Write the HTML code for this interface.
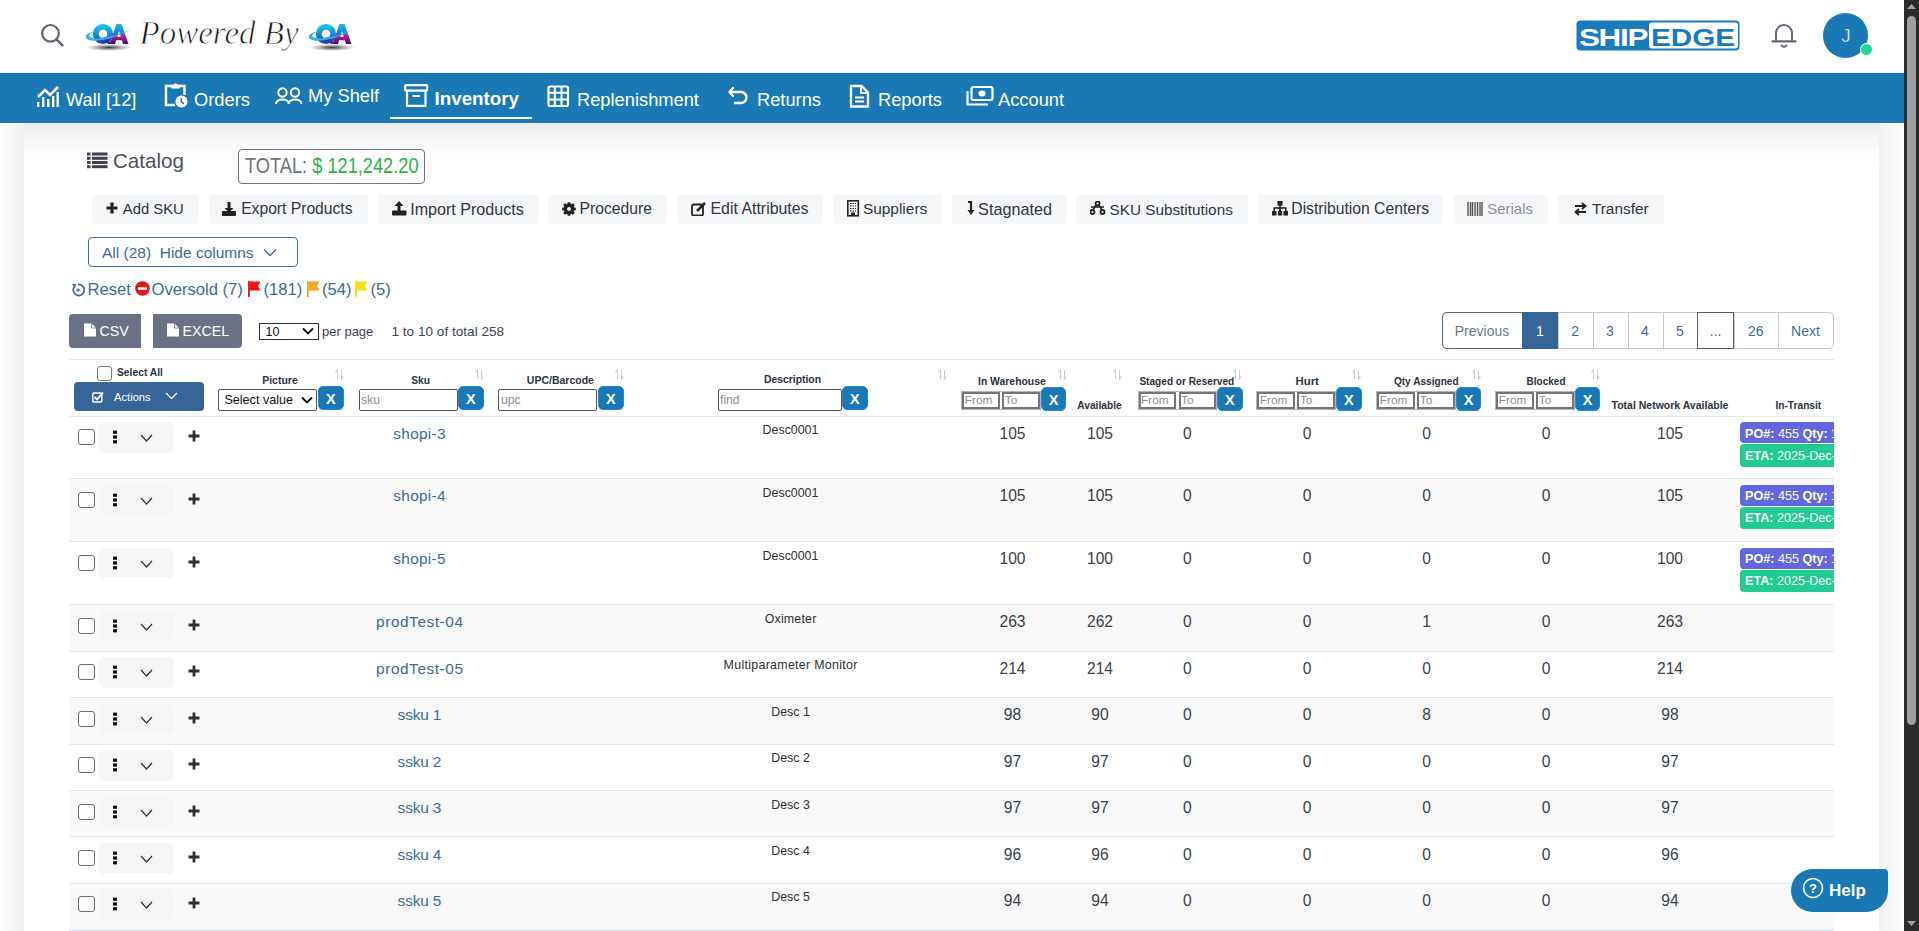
<!DOCTYPE html>
<html><head><meta charset="utf-8"><title>Catalog</title><style>
*{box-sizing:border-box}
html,body{margin:0;padding:0}
body{width:1919px;height:931px;overflow:hidden;position:relative;background:#fff;font-family:"Liberation Sans",sans-serif;color:#3b4252}
.a{position:absolute;white-space:nowrap}
</style></head>
<body>
<svg class="a" style="left:38px;top:21px;" width="28" height="28" viewBox="0 0 28 28"><circle cx="12.5" cy="12.3" r="8.3" fill="none" stroke="#5f6577" stroke-width="2.2"/><line x1="18.6" y1="18.4" x2="24.5" y2="24.3" stroke="#5f6577" stroke-width="2.4" stroke-linecap="round"/></svg><svg class="a" style="left:84px;top:14px;" width="50" height="40" viewBox="0 0 50 40">
<defs>
<linearGradient id="gql" x1="0" y1="0" x2="0" y2="1"><stop offset="0" stop-color="#16c0f0"/><stop offset="0.55" stop-color="#1a86d6"/><stop offset="1" stop-color="#2a3f9e"/></linearGradient>
<linearGradient id="gal" x1="0" y1="0" x2="0" y2="1"><stop offset="0" stop-color="#12bdf0"/><stop offset="0.45" stop-color="#1a7fd0"/><stop offset="0.62" stop-color="#c0158f"/><stop offset="1" stop-color="#2e1a7a"/></linearGradient>
<radialGradient id="gsl"><stop offset="0" stop-color="#000" stop-opacity="0.75"/><stop offset="0.6" stop-color="#000" stop-opacity="0.25"/><stop offset="1" stop-color="#000" stop-opacity="0"/></radialGradient>
</defs>
<ellipse cx="25" cy="33.5" rx="23" ry="3.6" fill="url(#gsl)"/>
<circle cx="19" cy="20" r="7.2" fill="none" stroke="url(#gql)" stroke-width="5.8"/>
<path d="M17 24 L24 30 L28 30 L21 23 Z" fill="#2a3d9a"/>
<path fill-rule="evenodd" d="M25.5 30 L32.5 10 L37.5 10 L44.5 30 L39 30 L37.8 26.3 L32.2 26.3 L31 30 Z M33.2 22.8 L35 17 L36.8 22.8 Z" fill="url(#gal)"/>
<path d="M2 22.5 C 1 29, 24 29, 47 15 C 28 24, 8 27, 5 22 C 6 19, 9 18, 12 17.5 C 6 18, 2 20, 2 22.5 Z" fill="#29b4ea"/>
</svg><svg class="a" style="left:307px;top:14px;" width="50" height="40" viewBox="0 0 50 40">
<defs>
<linearGradient id="gqr" x1="0" y1="0" x2="0" y2="1"><stop offset="0" stop-color="#16c0f0"/><stop offset="0.55" stop-color="#1a86d6"/><stop offset="1" stop-color="#2a3f9e"/></linearGradient>
<linearGradient id="gar" x1="0" y1="0" x2="0" y2="1"><stop offset="0" stop-color="#12bdf0"/><stop offset="0.45" stop-color="#1a7fd0"/><stop offset="0.62" stop-color="#c0158f"/><stop offset="1" stop-color="#2e1a7a"/></linearGradient>
<radialGradient id="gsr"><stop offset="0" stop-color="#000" stop-opacity="0.75"/><stop offset="0.6" stop-color="#000" stop-opacity="0.25"/><stop offset="1" stop-color="#000" stop-opacity="0"/></radialGradient>
</defs>
<ellipse cx="25" cy="33.5" rx="23" ry="3.6" fill="url(#gsr)"/>
<circle cx="19" cy="20" r="7.2" fill="none" stroke="url(#gqr)" stroke-width="5.8"/>
<path d="M17 24 L24 30 L28 30 L21 23 Z" fill="#2a3d9a"/>
<path fill-rule="evenodd" d="M25.5 30 L32.5 10 L37.5 10 L44.5 30 L39 30 L37.8 26.3 L32.2 26.3 L31 30 Z M33.2 22.8 L35 17 L36.8 22.8 Z" fill="url(#gar)"/>
<path d="M2 22.5 C 1 29, 24 29, 47 15 C 28 24, 8 27, 5 22 C 6 19, 9 18, 12 17.5 C 6 18, 2 20, 2 22.5 Z" fill="#29b4ea"/>
</svg><div class="a " style="left:139.5px;top:16.7px;font-size:33px;line-height:33px;font-family:'Liberation Serif';font-style:italic;color:#111;-webkit-text-stroke:0.8px #fff;transform:scaleX(1.0);transform-origin:left">Powered By</div><svg class="a" style="left:1576px;top:20px;" width="164" height="31" viewBox="0 0 164 31">
<rect x="0.5" y="0.5" width="163" height="30" rx="4" fill="#1b7abb"/>
<rect x="73" y="2.5" width="89" height="26" rx="3" fill="#fff"/>
<text x="3" y="25.5" font-family="Liberation Sans" font-weight="bold" font-size="24" fill="#fff" letter-spacing="-1" transform="scale(1,1)" textLength="68" lengthAdjust="spacingAndGlyphs">SHIP</text>
<text x="75" y="25.5" font-family="Liberation Sans" font-weight="bold" font-size="24" fill="#1b7abb" textLength="84" lengthAdjust="spacingAndGlyphs">EDGE</text>
</svg><svg class="a" style="left:1770px;top:21px;" width="28" height="28" viewBox="0 0 28 28"><path d="M6 20 V12 A8 8 0 0 1 22 12 V20" fill="none" stroke="#656a7c" stroke-width="2"/><line x1="2.5" y1="20.3" x2="25.5" y2="20.3" stroke="#656a7c" stroke-width="2.2" stroke-linecap="round"/><path d="M11.5 24.5 Q14 27 16.5 24.5" fill="none" stroke="#656a7c" stroke-width="2" stroke-linecap="round"/></svg><div class="a" style="left:1822.8px;top:13.0px;width:44.8px;height:44.8px;border-radius:50%;background:#1a79b5;"></div><div class="a " style="left:1823.5px;top:25.9px;font-size:19px;line-height:19px;width:44.8px;text-align:center;color:#fff;font-weight:normal;-webkit-text-stroke:0.5px #1a79b5;">J</div><div class="a" style="left:1859.5px;top:42.8px;width:13.0px;height:13.0px;border-radius:50%;background:#22d39a;border:1.5px solid #fff;"></div><div class="a" style="left:0.0px;top:73.0px;width:1904.0px;height:50.0px;background:#1a79b5;border-top:1px solid #1670ab;"></div><svg class="a" style="left:36px;top:85px;" width="24" height="23" viewBox="0 0 24 23"><path d="M2 12 L9 5 L14 10 L22 2" fill="none" stroke="#fff" stroke-width="2.6"/><rect x="1" y="17" width="2.4" height="5" fill="#fff"/><rect x="6" y="12" width="2.4" height="10" fill="#fff"/><rect x="11" y="14" width="2.4" height="8" fill="#fff"/><rect x="16" y="11" width="2.4" height="11" fill="#fff"/><rect x="20.5" y="7" width="2.4" height="15" fill="#fff"/></svg><svg class="a" style="left:164px;top:83px;" width="25" height="25" viewBox="0 0 25 25"><path d="M8 3 H2 V22 H11" fill="none" stroke="#fff" stroke-width="2.4"/><path d="M15 3 H20.5 V12" fill="none" stroke="#fff" stroke-width="2.4"/><rect x="7" y="1.5" width="9" height="4" rx="1" fill="#fff"/><circle cx="11.5" cy="1.8" r="1.5" fill="#fff"/><circle cx="17.5" cy="18.5" r="6" fill="#fff"/><path d="M17.3 15 V18.7 L19.8 20.8" fill="none" stroke="#1a79b5" stroke-width="1.6"/></svg><svg class="a" style="left:275px;top:87px;" width="28" height="18" viewBox="0 0 28 18"><circle cx="7.5" cy="5.5" r="4.2" fill="none" stroke="#fff" stroke-width="2"/><path d="M1 17 C1 11, 14 11, 14 17" fill="none" stroke="#fff" stroke-width="2"/><circle cx="20" cy="5.5" r="4.2" fill="none" stroke="#fff" stroke-width="2"/><path d="M13.5 17 C13.5 11, 26.5 11, 26.5 17" fill="none" stroke="#fff" stroke-width="2"/></svg><svg class="a" style="left:404px;top:84px;" width="25" height="24" viewBox="0 0 25 24"><rect x="1.2" y="1.2" width="22" height="5.5" rx="1" fill="none" stroke="#fff" stroke-width="2.2"/><path d="M3 7 V21.8 H21.5 V7" fill="none" stroke="#fff" stroke-width="2.2"/><rect x="8.5" y="11" width="7.5" height="2" fill="#fff"/></svg><svg class="a" style="left:547px;top:85px;" width="23" height="23" viewBox="0 0 23 23"><rect x="1.5" y="1.5" width="19.5" height="19.5" rx="1.5" fill="none" stroke="#fff" stroke-width="2.2"/><path d="M7.8 1.5 V21 M14.5 1.5 V21 M1.5 7.8 H21 M1.5 14.5 H21" stroke="#fff" stroke-width="2"/></svg><svg class="a" style="left:728px;top:86px;" width="22" height="19" viewBox="0 0 22 19"><path d="M5 2 L1.5 6 L5 10" fill="none" stroke="#fff" stroke-width="2.2" stroke-linecap="round"/><path d="M2 6 H13 A5.5 5.5 0 0 1 13 17 H6" fill="none" stroke="#fff" stroke-width="2.4"/></svg><svg class="a" style="left:849px;top:84px;" width="21" height="24" viewBox="0 0 21 24"><path d="M2 2 H12.5 L19 8.5 V22.5 H2 Z" fill="none" stroke="#fff" stroke-width="2.3"/><path d="M12 2 V9 H19" fill="none" stroke="#fff" stroke-width="2"/><path d="M6 13.5 H15 M6 17.5 H15" stroke="#fff" stroke-width="2"/></svg><svg class="a" style="left:966px;top:86px;" width="28" height="20" viewBox="0 0 28 20"><rect x="5.5" y="1" width="21" height="13" rx="2" fill="none" stroke="#fff" stroke-width="2.2"/><ellipse cx="16" cy="7.5" rx="3.5" ry="3" fill="#fff"/><path d="M1.5 5 V18.5 H22" fill="none" stroke="#fff" stroke-width="2.2"/></svg><div class="a " style="left:66.0px;top:90.8px;font-size:18.3px;line-height:18.3px;color:#fff">Wall [12]</div><div class="a " style="left:194.0px;top:90.8px;font-size:18.3px;line-height:18.3px;color:#fff">Orders</div><div class="a " style="left:308.0px;top:86.8px;font-size:18.3px;line-height:18.3px;color:#fff">My Shelf</div><div class="a " style="left:434.5px;top:90.4px;font-size:18.8px;line-height:18.8px;color:#fff;font-weight:bold;letter-spacing:0px">Inventory</div><div class="a " style="left:577.0px;top:90.8px;font-size:18.3px;line-height:18.3px;color:#fff">Replenishment</div><div class="a " style="left:757.0px;top:90.8px;font-size:18.3px;line-height:18.3px;color:#fff">Returns</div><div class="a " style="left:878.0px;top:90.8px;font-size:18.3px;line-height:18.3px;color:#fff">Reports</div><div class="a " style="left:998.0px;top:90.8px;font-size:18.3px;line-height:18.3px;color:#fff">Account</div><div class="a" style="left:390.0px;top:117.4px;width:142.0px;height:1.6px;background:#fff;"></div><div class="a" style="left:0.0px;top:123.0px;width:24.0px;height:808.0px;background:linear-gradient(to right,#fcfcfc,#f2f2f2);"></div><div class="a" style="left:1879.0px;top:123.0px;width:25.0px;height:808.0px;background:linear-gradient(to left,#fcfcfc,#f2f2f2);"></div><div class="a" style="left:24.0px;top:123.0px;width:1855.0px;height:808.0px;background:linear-gradient(#ebebeb 0px,#f6f6f6 15px,#fcfcfc 30px,#fff 42px);"></div><svg class="a" style="left:87px;top:152px;" width="21" height="17" viewBox="0 0 21 17"><g fill="#3d4150"><rect x="0" y="0.5" width="3.5" height="3"/><rect x="5" y="0.5" width="15.5" height="3"/><rect x="0" y="4.8" width="3.5" height="3"/><rect x="5" y="4.8" width="15.5" height="3"/><rect x="0" y="9" width="3.5" height="3"/><rect x="5" y="9" width="15.5" height="3"/><rect x="0" y="13.2" width="3.5" height="3"/><rect x="5" y="13.2" width="15.5" height="3"/></g></svg><div class="a " style="left:113.0px;top:150.8px;font-size:20.6px;line-height:20.6px;color:#4b5263">Catalog</div><div class="a" style="left:238.0px;top:149.0px;width:187.0px;height:34.5px;border:1px solid #6b7280;border-radius:4px;background:#fff;"></div><div class="a " style="left:245.0px;top:155.3px;font-size:22.5px;line-height:22.5px;color:#6b7280;transform:scaleX(0.81);transform-origin:left">TOTAL: <span style="color:#2fb14c">$ 121,242.20</span></div><div class="a" style="left:92.0px;top:194.0px;width:106.8px;height:29.5px;background:#f6f7f9;border-radius:4px;"></div><svg class="a" style="left:106px;top:202px;" width="14" height="12" viewBox="0 0 14 12"><path d="M6 0.5 V11.5 M0.5 6 H11.5" stroke="#222" stroke-width="3.2"/></svg><div class="a " style="left:122.8px;top:201.6px;font-size:14.83px;line-height:14.83px;color:#2f3542">Add SKU</div><div class="a" style="left:209.2px;top:194.0px;width:158.6px;height:29.5px;background:#f6f7f9;border-radius:4px;"></div><svg class="a" style="left:222px;top:202px;" width="15" height="14" viewBox="0 0 15 14"><path d="M5.5 0 H8.5 V6 H11.5 L7 10.5 L2.5 6 H5.5 Z" fill="#222"/><rect x="0" y="9" width="14" height="5" rx="1" fill="#222"/></svg><div class="a " style="left:241.2px;top:201.0px;font-size:15.65px;line-height:15.65px;color:#2f3542">Export Products</div><div class="a" style="left:378.0px;top:194.0px;width:160.8px;height:29.5px;background:#f6f7f9;border-radius:4px;"></div><svg class="a" style="left:392px;top:201px;" width="16" height="15" viewBox="0 0 16 15"><path d="M5.5 10 H8.5 V5 H11.5 L7 0 L2.5 5 H5.5 Z" fill="#222"/><rect x="0" y="9.5" width="14.5" height="5" rx="1" fill="#222"/></svg><div class="a " style="left:410.2px;top:200.6px;font-size:16.1px;line-height:16.1px;color:#2f3542">Import Products</div><div class="a" style="left:548.0px;top:194.0px;width:118.9px;height:29.5px;background:#f6f7f9;border-radius:4px;"></div><svg class="a" style="left:562px;top:202px;" width="15" height="14" viewBox="0 0 15 14"><g fill="#222"><circle cx="7" cy="7" r="5.2"/><rect x="5.5" y="0.2" width="3" height="13.6" rx="0.6"/><rect x="5.5" y="0.2" width="3" height="13.6" rx="0.6" transform="rotate(45 7 7)"/><rect x="5.5" y="0.2" width="3" height="13.6" rx="0.6" transform="rotate(90 7 7)"/><rect x="5.5" y="0.2" width="3" height="13.6" rx="0.6" transform="rotate(135 7 7)"/></g><circle cx="7" cy="7" r="2" fill="#f6f7f9"/></svg><div class="a " style="left:579.5px;top:200.9px;font-size:15.7px;line-height:15.7px;color:#2f3542">Procedure</div><div class="a" style="left:677.1px;top:194.0px;width:145.7px;height:29.5px;background:#f6f7f9;border-radius:4px;"></div><svg class="a" style="left:691px;top:202px;" width="16" height="14" viewBox="0 0 16 14"><rect x="1" y="2.5" width="11" height="11" rx="1.5" fill="none" stroke="#222" stroke-width="1.8"/><path d="M6 9 L14 1" stroke="#222" stroke-width="2.5"/></svg><div class="a " style="left:710.5px;top:200.7px;font-size:15.9px;line-height:15.9px;color:#2f3542">Edit Attributes</div><div class="a" style="left:832.9px;top:194.0px;width:109.1px;height:29.5px;background:#f6f7f9;border-radius:4px;"></div><svg class="a" style="left:847px;top:200px;" width="13" height="17" viewBox="0 0 13 17"><rect x="0.8" y="0.8" width="10.5" height="15" fill="none" stroke="#222" stroke-width="1.6"/><path d="M3 3.5 H9 M3 6 H9 M3 8.5 H9 M3 11 H9" stroke="#222" stroke-width="1.2" stroke-dasharray="1.5 1"/><rect x="4" y="12.5" width="4" height="3.5" fill="#222"/></svg><div class="a " style="left:862.9px;top:201.1px;font-size:15.45px;line-height:15.45px;color:#2f3542">Suppliers</div><div class="a" style="left:952.2px;top:194.0px;width:114.5px;height:29.5px;background:#f6f7f9;border-radius:4px;"></div><svg class="a" style="left:966px;top:201px;" width="10" height="15" viewBox="0 0 10 15"><path d="M2 1 H5 V11" fill="none" stroke="#222" stroke-width="2.2"/><path d="M1.5 9 L5 14 L8.5 9 Z" fill="#222"/></svg><div class="a " style="left:978.1px;top:200.5px;font-size:16.2px;line-height:16.2px;color:#2f3542">Stagnated</div><div class="a" style="left:1076.2px;top:194.0px;width:171.7px;height:29.5px;background:#f6f7f9;border-radius:4px;"></div><svg class="a" style="left:1090px;top:201px;" width="16" height="14" viewBox="0 0 16 14"><circle cx="7.5" cy="2.5" r="2" fill="none" stroke="#222" stroke-width="1.8"/><circle cx="2.5" cy="11" r="2" fill="none" stroke="#222" stroke-width="1.8"/><circle cx="12.5" cy="11" r="2" fill="none" stroke="#222" stroke-width="1.8"/><path d="M6 4 L3 9 M9 4 L12 9 M1 6 H14" stroke="#222" stroke-width="1.6"/></svg><div class="a " style="left:1109.5px;top:202.0px;font-size:15.3px;line-height:15.3px;color:#2f3542">SKU Substitutions</div><div class="a" style="left:1257.7px;top:194.0px;width:185.8px;height:29.5px;background:#f6f7f9;border-radius:4px;"></div><svg class="a" style="left:1272px;top:201px;" width="17" height="15" viewBox="0 0 17 15"><rect x="5.5" y="0" width="5" height="4.5" fill="#222"/><rect x="0" y="10" width="4.5" height="4.5" fill="#222"/><rect x="5.8" y="10" width="4.5" height="4.5" fill="#222"/><rect x="11.5" y="10" width="4.5" height="4.5" fill="#222"/><path d="M8 4 V10 M2.2 10 V7 H13.8 V10" fill="none" stroke="#222" stroke-width="1.6"/></svg><div class="a " style="left:1291.3px;top:200.9px;font-size:15.7px;line-height:15.7px;color:#2f3542">Distribution Centers</div><div class="a" style="left:1454.0px;top:194.0px;width:94.1px;height:29.5px;background:#f6f7f9;border-radius:4px;"></div><svg class="a" style="left:1467px;top:202px;" width="17" height="14" viewBox="0 0 17 14"><path d="M1 0 V14 M3.5 0 V14 M5.5 0 V14 M8 0 V14 M10.5 0 V14 M13 0 V14 M15 0 V14" stroke="#555" stroke-width="1.4"/></svg><div class="a " style="left:1487.3px;top:201.5px;font-size:14.95px;line-height:14.95px;color:#8a8f99">Serials</div><div class="a" style="left:1557.9px;top:194.0px;width:106.0px;height:29.5px;background:#f6f7f9;border-radius:4px;"></div><svg class="a" style="left:1574px;top:202px;" width="14" height="14" viewBox="0 0 14 14"><path d="M1 4 H11 M8 1 L11.5 4 L8 7 M12 10 H2 M5 7 L1.5 10 L5 13" fill="none" stroke="#222" stroke-width="1.8"/></svg><div class="a " style="left:1591.9px;top:201.2px;font-size:15.4px;line-height:15.4px;color:#2f3542">Transfer</div><div class="a" style="left:88.0px;top:237.3px;width:209.5px;height:29.3px;border:1.3px solid #3d6a9c;border-radius:4px;background:#fff;"></div><div class="a " style="left:102.0px;top:244.5px;font-size:15.5px;line-height:15.5px;color:#3d6b9c">All (28)&nbsp; Hide columns</div><svg class="a" style="left:263px;top:248px;" width="14" height="9" viewBox="0 0 14 9"><path d="M1 1.5 L7 7.5 L13 1.5" fill="none" stroke="#3d6a9c" stroke-width="1.4"/></svg><svg class="a" style="left:71px;top:283px;" width="14" height="14" viewBox="0 0 14 14"><path d="M3.5 3.5 A5.5 5.5 0 1 0 7 1.5" fill="none" stroke="#3d6b9c" stroke-width="1.8"/><path d="M1 1 L5 1 L4 5 Z" fill="#3d6b9c"/><circle cx="7" cy="7" r="1.6" fill="#3d6b9c"/></svg><div class="a " style="left:87.5px;top:281.9px;font-size:16.6px;line-height:16.6px;color:#3d6b9c">Reset</div><svg class="a" style="left:135px;top:281px;" width="15" height="15" viewBox="0 0 15 15"><circle cx="7.5" cy="7.5" r="7.3" fill="#e8141c"/><rect x="3" y="6.2" width="9" height="2.6" fill="#fff"/></svg><div class="a " style="left:151.5px;top:281.9px;font-size:16.6px;line-height:16.6px;color:#3d6b9c">Oversold (7)</div><svg class="a" style="left:248px;top:281px;" width="13" height="16" viewBox="0 0 13 16"><rect x="0" y="0" width="1.8" height="16" fill="#ee1111"/><path d="M1.5 0.5 H12.5 L10 5 L12.5 9.5 H1.5 Z" fill="#ee1111"/></svg><div class="a " style="left:263.5px;top:281.9px;font-size:16.6px;line-height:16.6px;color:#3d6b9c">(181)</div><svg class="a" style="left:306.5px;top:281px;" width="13" height="16" viewBox="0 0 13 16"><rect x="0" y="0" width="1.8" height="16" fill="#f5a623"/><path d="M1.5 0.5 H12.5 L10 5 L12.5 9.5 H1.5 Z" fill="#f5a623"/></svg><div class="a " style="left:322.0px;top:281.9px;font-size:16.6px;line-height:16.6px;color:#3d6b9c">(54)</div><svg class="a" style="left:354.5px;top:281px;" width="13" height="16" viewBox="0 0 13 16"><rect x="0" y="0" width="1.8" height="16" fill="#f2e21a"/><path d="M1.5 0.5 H12.5 L10 5 L12.5 9.5 H1.5 Z" fill="#f2e21a"/></svg><div class="a " style="left:370.5px;top:281.9px;font-size:16.6px;line-height:16.6px;color:#3d6b9c">(5)</div><div class="a" style="left:69.4px;top:314.4px;width:71.5px;height:33.3px;background:#6b7185;border-radius:4px 0 0 4px;"></div><div class="a" style="left:153.0px;top:314.4px;width:89.0px;height:33.3px;background:#6b7185;border-radius:0 4px 4px 0;"></div><svg class="a" style="left:83px;top:323px;" width="14" height="14" viewBox="0 0 14 14"><path d="M1 0.5 H8.5 L13 5 V13.5 H1 Z" fill="#fff"/><path d="M8.5 0.5 V5 H13" fill="none" stroke="#6b7185" stroke-width="0.8"/></svg><svg class="a" style="left:166px;top:323px;" width="14" height="14" viewBox="0 0 14 14"><path d="M1 0.5 H8.5 L13 5 V13.5 H1 Z" fill="#fff"/><path d="M8.5 0.5 V5 H13" fill="none" stroke="#6b7185" stroke-width="0.8"/></svg><div class="a " style="left:99.5px;top:324.3px;font-size:14.2px;line-height:14.2px;color:#fff">CSV</div><div class="a " style="left:182.5px;top:324.3px;font-size:14.2px;line-height:14.2px;color:#fff">EXCEL</div><div class="a" style="left:259.0px;top:323.2px;width:60.0px;height:16.5px;border:1px solid #333;background:#fff;"></div><div class="a " style="left:265.5px;top:326.4px;font-size:12.5px;line-height:12.5px;color:#111">10</div><svg class="a" style="left:302px;top:327px;" width="12" height="8" viewBox="0 0 12 8"><path d="M1 1.5 L6 6.5 L11 1.5" fill="none" stroke="#111" stroke-width="1.8"/></svg><div class="a " style="left:322.0px;top:325.2px;font-size:13px;line-height:13px;color:#3a4556">per page</div><div class="a " style="left:391.5px;top:324.5px;font-size:13.6px;line-height:13.6px;color:#3a4556">1 to 10 of total 258</div><div class="a" style="left:1442.0px;top:312.0px;width:391.5px;height:37.0px;border:1px solid #c4cad2;border-radius:5px;background:#fff;"></div><div class="a" style="left:1442.0px;top:312.0px;width:80.5px;height:37.0px;border:1px solid #5b6b80;border-radius:5px 0 0 5px;"></div><div class="a" style="left:1522.0px;top:312.0px;width:36.0px;height:37.0px;background:#386597;"></div><div class="a" style="left:1558.0px;top:312.0px;width:1.0px;height:37.0px;background:#c4cad2;"></div><div class="a" style="left:1592.5px;top:312.0px;width:1.0px;height:37.0px;background:#c4cad2;"></div><div class="a" style="left:1627.5px;top:312.0px;width:1.0px;height:37.0px;background:#c4cad2;"></div><div class="a" style="left:1662.5px;top:312.0px;width:1.0px;height:37.0px;background:#c4cad2;"></div><div class="a" style="left:1697.2px;top:312.0px;width:1.0px;height:37.0px;background:#c4cad2;"></div><div class="a" style="left:1734.0px;top:312.0px;width:1.0px;height:37.0px;background:#c4cad2;"></div><div class="a" style="left:1777.5px;top:312.0px;width:1.0px;height:37.0px;background:#c4cad2;"></div><div class="a" style="left:1697.2px;top:312.0px;width:37.0px;height:37.0px;border:1px solid #4e5d70;"></div><div class="a " style="left:1442.0px;top:324.1px;font-size:14px;line-height:14px;width:80.0px;text-align:center;color:#6b7a8c">Previous</div><div class="a " style="left:1522.0px;top:324.1px;font-size:14px;line-height:14px;width:36.0px;text-align:center;color:#fff">1</div><div class="a " style="left:1558.0px;top:324.1px;font-size:14px;line-height:14px;width:34.5px;text-align:center;color:#3d6b9c">2</div><div class="a " style="left:1592.5px;top:324.1px;font-size:14px;line-height:14px;width:35.0px;text-align:center;color:#3d6b9c">3</div><div class="a " style="left:1627.5px;top:324.1px;font-size:14px;line-height:14px;width:35.0px;text-align:center;color:#3d6b9c">4</div><div class="a " style="left:1662.5px;top:324.1px;font-size:14px;line-height:14px;width:34.7px;text-align:center;color:#3d6b9c">5</div><div class="a " style="left:1697.2px;top:324.1px;font-size:14px;line-height:14px;width:36.8px;text-align:center;color:#3d6b9c">...</div><div class="a " style="left:1734.0px;top:324.1px;font-size:14px;line-height:14px;width:43.5px;text-align:center;color:#3d6b9c">26</div><div class="a " style="left:1777.5px;top:324.1px;font-size:14px;line-height:14px;width:56.0px;text-align:center;color:#3d6b9c">Next</div><div class="a" style="left:69.0px;top:358.6px;width:1765.0px;height:1.5px;background:#e1e8f1;"></div><div class="a" style="left:96.5px;top:365.5px;width:15.5px;height:15.0px;border:1.3px solid #777;border-radius:3px;background:#fff;"></div><div class="a " style="left:117.0px;top:368.0px;font-size:10.3px;line-height:10.3px;color:#2d3340;font-weight:bold">Select All</div><div class="a" style="left:74.0px;top:382.3px;width:130.0px;height:28.5px;background:#386597;border-radius:4px;"></div><svg class="a" style="left:92px;top:391px;" width="12" height="12" viewBox="0 0 12 12"><rect x="0.8" y="2" width="9" height="9" rx="1" fill="none" stroke="#fff" stroke-width="1.4"/><path d="M2.5 6 L5 8.5 L11 1.5" fill="none" stroke="#fff" stroke-width="1.8"/></svg><div class="a " style="left:114.0px;top:391.5px;font-size:11.2px;line-height:11.2px;color:#fff">Actions</div><svg class="a" style="left:165px;top:392px;" width="13" height="8" viewBox="0 0 13 8"><path d="M1 1 L6.5 6.5 L12 1" fill="none" stroke="#fff" stroke-width="1.3"/></svg><div class="a " style="left:218.0px;top:375.3px;font-size:10.5px;line-height:10.5px;width:124.0px;text-align:center;color:#2d3340;font-weight:bold">Picture</div><svg class="a" style="left:335px;top:369px;" width="9" height="11" viewBox="0 0 9 11"><path d="M2.5 10 V1 L0.5 3.5 M6.5 1 V10 L8.5 7.5" fill="none" stroke="#c8ccd2" stroke-width="1.1"/></svg><div class="a" style="left:218.2px;top:389.2px;width:99.2px;height:21.6px;border:1px solid #555;border-radius:2px;background:#fff;"></div><div class="a " style="left:224.4px;top:393.8px;font-size:12.6px;line-height:12.6px;color:#111">Select value</div><svg class="a" style="left:301px;top:396px;" width="12" height="8" viewBox="0 0 12 8"><path d="M1 1.5 L6 6.5 L11 1.5" fill="none" stroke="#111" stroke-width="1.9"/></svg><div class="a" style="left:318.2px;top:386.2px;width:25.5px;height:23.5px;background:#1a79b5;border-radius:5px;border:1px solid #1f88e8;"></div><div class="a " style="left:318.2px;top:391.7px;font-size:14.5px;line-height:14.5px;width:25.5px;text-align:center;color:#fff;font-weight:bold">X</div><div class="a " style="left:358.6px;top:375.5px;font-size:10.3px;line-height:10.3px;width:124.0px;text-align:center;color:#2d3340;font-weight:bold">Sku</div><svg class="a" style="left:475px;top:369px;" width="9" height="11" viewBox="0 0 9 11"><path d="M2.5 10 V1 L0.5 3.5 M6.5 1 V10 L8.5 7.5" fill="none" stroke="#c8ccd2" stroke-width="1.1"/></svg><div class="a" style="left:358.6px;top:389.2px;width:99.0px;height:21.6px;border:1px solid #555;border-radius:2px;background:#fff;"></div><div class="a " style="left:361.0px;top:394.2px;font-size:12.2px;line-height:12.2px;color:#8a8f96">sku</div><div class="a" style="left:458.1px;top:386.2px;width:25.5px;height:23.5px;background:#1a79b5;border-radius:5px;border:1px solid #1f88e8;"></div><div class="a " style="left:458.1px;top:391.7px;font-size:14.5px;line-height:14.5px;width:25.5px;text-align:center;color:#fff;font-weight:bold">X</div><div class="a " style="left:498.4px;top:375.3px;font-size:10.5px;line-height:10.5px;width:124.0px;text-align:center;color:#2d3340;font-weight:bold">UPC/Barcode</div><svg class="a" style="left:615px;top:369px;" width="9" height="11" viewBox="0 0 9 11"><path d="M2.5 10 V1 L0.5 3.5 M6.5 1 V10 L8.5 7.5" fill="none" stroke="#c8ccd2" stroke-width="1.1"/></svg><div class="a" style="left:498.4px;top:389.2px;width:99.0px;height:21.6px;border:1px solid #555;border-radius:2px;background:#fff;"></div><div class="a " style="left:501.0px;top:394.2px;font-size:12.2px;line-height:12.2px;color:#8a8f96">upc</div><div class="a" style="left:598.1px;top:386.2px;width:25.5px;height:23.5px;background:#1a79b5;border-radius:5px;border:1px solid #1f88e8;"></div><div class="a " style="left:598.1px;top:391.7px;font-size:14.5px;line-height:14.5px;width:25.5px;text-align:center;color:#fff;font-weight:bold">X</div><div class="a " style="left:717.5px;top:375.4px;font-size:10.4px;line-height:10.4px;width:150.0px;text-align:center;color:#2d3340;font-weight:bold">Description</div><svg class="a" style="left:938px;top:369px;" width="9" height="11" viewBox="0 0 9 11"><path d="M2.5 10 V1 L0.5 3.5 M6.5 1 V10 L8.5 7.5" fill="none" stroke="#c8ccd2" stroke-width="1.1"/></svg><div class="a" style="left:717.5px;top:389.2px;width:124.0px;height:21.6px;border:1px solid #555;border-radius:2px;background:#fff;"></div><div class="a " style="left:720.0px;top:394.2px;font-size:12.2px;line-height:12.2px;color:#8a8f96">find</div><div class="a" style="left:842.2px;top:386.2px;width:25.5px;height:23.5px;background:#1a79b5;border-radius:5px;border:1px solid #1f88e8;"></div><div class="a " style="left:842.2px;top:391.7px;font-size:14.5px;line-height:14.5px;width:25.5px;text-align:center;color:#fff;font-weight:bold">X</div><div class="a " style="left:978.0px;top:376.9px;font-size:10.4px;line-height:10.4px;color:#2d3340;font-weight:bold">In Warehouse</div><svg class="a" style="left:1058px;top:369px;" width="9" height="11" viewBox="0 0 9 11"><path d="M2.5 10 V1 L0.5 3.5 M6.5 1 V10 L8.5 7.5" fill="none" stroke="#c8ccd2" stroke-width="1.1"/></svg><div class="a" style="left:961.3px;top:391.1px;width:79.3px;height:18.5px;border:1px solid #b5b5b5;background:#fff;"></div><div class="a" style="left:962.3px;top:392.1px;width:37.5px;height:16.5px;border:2px solid #767676;background:#fff;"></div><div class="a " style="left:964.8px;top:395.0px;font-size:11.8px;line-height:11.8px;color:#8a8f96">From</div><div class="a" style="left:1002.3px;top:392.1px;width:37.3px;height:16.5px;border:2px solid #767676;background:#fff;"></div><div class="a " style="left:1004.8px;top:395.0px;font-size:11.8px;line-height:11.8px;color:#8a8f96">To</div><div class="a" style="left:1040.9px;top:387.0px;width:25.5px;height:23.8px;background:#1a79b5;border-radius:5px;border:1px solid #1f88e8;"></div><div class="a " style="left:1040.9px;top:392.6px;font-size:14.5px;line-height:14.5px;width:25.5px;text-align:center;color:#fff;font-weight:bold">X</div><div class="a " style="left:1077.3px;top:400.8px;font-size:10.2px;line-height:10.2px;color:#2d3340;font-weight:bold">Available</div><svg class="a" style="left:1113px;top:369px;" width="9" height="11" viewBox="0 0 9 11"><path d="M2.5 10 V1 L0.5 3.5 M6.5 1 V10 L8.5 7.5" fill="none" stroke="#c8ccd2" stroke-width="1.1"/></svg><div class="a " style="left:1139.4px;top:377.2px;font-size:10.1px;line-height:10.1px;color:#2d3340;font-weight:bold">Staged or Reserved</div><svg class="a" style="left:1233px;top:369px;" width="9" height="11" viewBox="0 0 9 11"><path d="M2.5 10 V1 L0.5 3.5 M6.5 1 V10 L8.5 7.5" fill="none" stroke="#c8ccd2" stroke-width="1.1"/></svg><div class="a" style="left:1137.5px;top:391.1px;width:79.3px;height:18.5px;border:1px solid #b5b5b5;background:#fff;"></div><div class="a" style="left:1138.5px;top:392.1px;width:37.5px;height:16.5px;border:2px solid #767676;background:#fff;"></div><div class="a " style="left:1141.0px;top:395.0px;font-size:11.8px;line-height:11.8px;color:#8a8f96">From</div><div class="a" style="left:1178.5px;top:392.1px;width:37.3px;height:16.5px;border:2px solid #767676;background:#fff;"></div><div class="a " style="left:1181.0px;top:395.0px;font-size:11.8px;line-height:11.8px;color:#8a8f96">To</div><div class="a" style="left:1217.1px;top:387.0px;width:25.5px;height:23.8px;background:#1a79b5;border-radius:5px;border:1px solid #1f88e8;"></div><div class="a " style="left:1217.1px;top:392.6px;font-size:14.5px;line-height:14.5px;width:25.5px;text-align:center;color:#fff;font-weight:bold">X</div><div class="a " style="left:1295.5px;top:376.0px;font-size:11.4px;line-height:11.4px;color:#2d3340;font-weight:bold">Hurt</div><svg class="a" style="left:1352px;top:369px;" width="9" height="11" viewBox="0 0 9 11"><path d="M2.5 10 V1 L0.5 3.5 M6.5 1 V10 L8.5 7.5" fill="none" stroke="#c8ccd2" stroke-width="1.1"/></svg><div class="a" style="left:1256.4px;top:391.1px;width:79.3px;height:18.5px;border:1px solid #b5b5b5;background:#fff;"></div><div class="a" style="left:1257.4px;top:392.1px;width:37.5px;height:16.5px;border:2px solid #767676;background:#fff;"></div><div class="a " style="left:1259.9px;top:395.0px;font-size:11.8px;line-height:11.8px;color:#8a8f96">From</div><div class="a" style="left:1297.4px;top:392.1px;width:37.3px;height:16.5px;border:2px solid #767676;background:#fff;"></div><div class="a " style="left:1299.9px;top:395.0px;font-size:11.8px;line-height:11.8px;color:#8a8f96">To</div><div class="a" style="left:1336.0px;top:387.0px;width:25.5px;height:23.8px;background:#1a79b5;border-radius:5px;border:1px solid #1f88e8;"></div><div class="a " style="left:1336.0px;top:392.6px;font-size:14.5px;line-height:14.5px;width:25.5px;text-align:center;color:#fff;font-weight:bold">X</div><div class="a " style="left:1393.9px;top:377.2px;font-size:10.1px;line-height:10.1px;color:#2d3340;font-weight:bold">Qty Assigned</div><svg class="a" style="left:1472px;top:369px;" width="9" height="11" viewBox="0 0 9 11"><path d="M2.5 10 V1 L0.5 3.5 M6.5 1 V10 L8.5 7.5" fill="none" stroke="#c8ccd2" stroke-width="1.1"/></svg><div class="a" style="left:1376.3px;top:391.1px;width:79.3px;height:18.5px;border:1px solid #b5b5b5;background:#fff;"></div><div class="a" style="left:1377.3px;top:392.1px;width:37.5px;height:16.5px;border:2px solid #767676;background:#fff;"></div><div class="a " style="left:1379.8px;top:395.0px;font-size:11.8px;line-height:11.8px;color:#8a8f96">From</div><div class="a" style="left:1417.3px;top:392.1px;width:37.3px;height:16.5px;border:2px solid #767676;background:#fff;"></div><div class="a " style="left:1419.8px;top:395.0px;font-size:11.8px;line-height:11.8px;color:#8a8f96">To</div><div class="a" style="left:1455.9px;top:387.0px;width:25.5px;height:23.8px;background:#1a79b5;border-radius:5px;border:1px solid #1f88e8;"></div><div class="a " style="left:1455.9px;top:392.6px;font-size:14.5px;line-height:14.5px;width:25.5px;text-align:center;color:#fff;font-weight:bold">X</div><div class="a " style="left:1526.6px;top:377.2px;font-size:10px;line-height:10px;color:#2d3340;font-weight:bold">Blocked</div><svg class="a" style="left:1591px;top:369px;" width="9" height="11" viewBox="0 0 9 11"><path d="M2.5 10 V1 L0.5 3.5 M6.5 1 V10 L8.5 7.5" fill="none" stroke="#c8ccd2" stroke-width="1.1"/></svg><div class="a" style="left:1495.3px;top:391.1px;width:79.3px;height:18.5px;border:1px solid #b5b5b5;background:#fff;"></div><div class="a" style="left:1496.3px;top:392.1px;width:37.5px;height:16.5px;border:2px solid #767676;background:#fff;"></div><div class="a " style="left:1498.8px;top:395.0px;font-size:11.8px;line-height:11.8px;color:#8a8f96">From</div><div class="a" style="left:1536.3px;top:392.1px;width:37.3px;height:16.5px;border:2px solid #767676;background:#fff;"></div><div class="a " style="left:1538.8px;top:395.0px;font-size:11.8px;line-height:11.8px;color:#8a8f96">To</div><div class="a" style="left:1574.9px;top:387.0px;width:25.5px;height:23.8px;background:#1a79b5;border-radius:5px;border:1px solid #1f88e8;"></div><div class="a " style="left:1574.9px;top:392.6px;font-size:14.5px;line-height:14.5px;width:25.5px;text-align:center;color:#fff;font-weight:bold">X</div><div class="a " style="left:1611.5px;top:399.6px;font-size:10.5px;line-height:10.5px;color:#2d3340;font-weight:bold">Total Network Available</div><div class="a " style="left:1775.4px;top:400.7px;font-size:10.2px;line-height:10.2px;color:#2d3340;font-weight:bold">In-Transit</div><div class="a" style="left:69.0px;top:415.7px;width:1765.0px;height:1.6px;background:#e1e8f1;"></div><div class="a" style="left:69.0px;top:416.5px;width:1765.0px;height:62.7px;background:#fff;"></div><div class="a" style="left:69.0px;top:478.2px;width:1765.0px;height:2.0px;background:#e1e8f1;"></div><div class="a" style="left:78.3px;top:429.0px;width:16.4px;height:16.0px;border:1.5px solid #6c6c6c;border-radius:3px;background:#fff;"></div><div class="a" style="left:99.2px;top:422.0px;width:74.7px;height:30.7px;background:#f5f6f8;border-radius:5px;"></div><svg class="a" style="left:112px;top:430.0px;" width="6" height="14" viewBox="0 0 6 14"><rect x="1" y="0.6" width="4" height="3.2" fill="#111"/><rect x="1" y="5.4" width="4" height="3.2" fill="#111"/><rect x="1" y="10.2" width="4" height="3.2" fill="#111"/></svg><svg class="a" style="left:140px;top:434.0px;" width="13" height="9" viewBox="0 0 13 9"><path d="M1 1 L6.5 7 L12 1" fill="none" stroke="#333" stroke-width="1.2"/></svg><svg class="a" style="left:188px;top:430.0px;" width="12" height="12" viewBox="0 0 12 12"><path d="M6 0.5 V11.5 M0.5 6 H11.5" stroke="#2a2f3a" stroke-width="2.8"/></svg><div class="a " style="left:359.1px;top:425.6px;font-size:15.4px;line-height:15.4px;width:121.0px;text-align:center;color:#3d6b9c;letter-spacing:0.3px">shopi-3</div><div class="a " style="left:700.0px;top:424.0px;font-size:12.4px;line-height:12.4px;width:181.0px;text-align:center;color:#2f2f2f;letter-spacing:0px">Desc0001</div><div class="a " style="left:972.5px;top:425.6px;font-size:15.6px;line-height:15.6px;width:80.0px;text-align:center;color:#3a3f4a">105</div><div class="a " style="left:1060.0px;top:425.6px;font-size:15.6px;line-height:15.6px;width:80.0px;text-align:center;color:#3a3f4a">105</div><div class="a " style="left:1147.4px;top:425.6px;font-size:15.6px;line-height:15.6px;width:80.0px;text-align:center;color:#3a3f4a">0</div><div class="a " style="left:1267.0px;top:425.6px;font-size:15.6px;line-height:15.6px;width:80.0px;text-align:center;color:#3a3f4a">0</div><div class="a " style="left:1386.5px;top:425.6px;font-size:15.6px;line-height:15.6px;width:80.0px;text-align:center;color:#3a3f4a">0</div><div class="a " style="left:1506.0px;top:425.6px;font-size:15.6px;line-height:15.6px;width:80.0px;text-align:center;color:#3a3f4a">0</div><div class="a " style="left:1630.0px;top:425.6px;font-size:15.6px;line-height:15.6px;width:80.0px;text-align:center;color:#3a3f4a">105</div><div class="a" style="left:1740.0px;top:422.2px;width:94.0px;height:21.2px;background:#6466e0;border-radius:4px 0 0 4px;overflow:hidden;"><div class="a" style="left:5px;top:5.5px;font-size:12.6px;line-height:12.6px;color:#fff"><b>PO#:</b> 455 <b>Qty:</b> 10</div></div><div class="a" style="left:1740.0px;top:444.3px;width:94.0px;height:22.4px;background:#21cc94;border-radius:4px 0 0 4px;overflow:hidden;"><div class="a" style="left:5px;top:5.4px;font-size:12.6px;line-height:12.6px;color:#fff"><b>ETA:</b> 2025-Dec-31</div></div><div class="a" style="left:69.0px;top:479.2px;width:1765.0px;height:62.8px;background:#f9f9f9;"></div><div class="a" style="left:69.0px;top:541.0px;width:1765.0px;height:2.0px;background:#e1e8f1;"></div><div class="a" style="left:78.3px;top:491.7px;width:16.4px;height:16.0px;border:1.5px solid #6c6c6c;border-radius:3px;background:#fff;"></div><div class="a" style="left:99.2px;top:484.7px;width:74.7px;height:30.7px;background:#f5f6f8;border-radius:5px;"></div><svg class="a" style="left:112px;top:492.7px;" width="6" height="14" viewBox="0 0 6 14"><rect x="1" y="0.6" width="4" height="3.2" fill="#111"/><rect x="1" y="5.4" width="4" height="3.2" fill="#111"/><rect x="1" y="10.2" width="4" height="3.2" fill="#111"/></svg><svg class="a" style="left:140px;top:496.7px;" width="13" height="9" viewBox="0 0 13 9"><path d="M1 1 L6.5 7 L12 1" fill="none" stroke="#333" stroke-width="1.2"/></svg><svg class="a" style="left:188px;top:492.7px;" width="12" height="12" viewBox="0 0 12 12"><path d="M6 0.5 V11.5 M0.5 6 H11.5" stroke="#2a2f3a" stroke-width="2.8"/></svg><div class="a " style="left:359.1px;top:488.3px;font-size:15.4px;line-height:15.4px;width:121.0px;text-align:center;color:#3d6b9c;letter-spacing:0.3px">shopi-4</div><div class="a " style="left:700.0px;top:486.7px;font-size:12.4px;line-height:12.4px;width:181.0px;text-align:center;color:#2f2f2f;letter-spacing:0px">Desc0001</div><div class="a " style="left:972.5px;top:488.3px;font-size:15.6px;line-height:15.6px;width:80.0px;text-align:center;color:#3a3f4a">105</div><div class="a " style="left:1060.0px;top:488.3px;font-size:15.6px;line-height:15.6px;width:80.0px;text-align:center;color:#3a3f4a">105</div><div class="a " style="left:1147.4px;top:488.3px;font-size:15.6px;line-height:15.6px;width:80.0px;text-align:center;color:#3a3f4a">0</div><div class="a " style="left:1267.0px;top:488.3px;font-size:15.6px;line-height:15.6px;width:80.0px;text-align:center;color:#3a3f4a">0</div><div class="a " style="left:1386.5px;top:488.3px;font-size:15.6px;line-height:15.6px;width:80.0px;text-align:center;color:#3a3f4a">0</div><div class="a " style="left:1506.0px;top:488.3px;font-size:15.6px;line-height:15.6px;width:80.0px;text-align:center;color:#3a3f4a">0</div><div class="a " style="left:1630.0px;top:488.3px;font-size:15.6px;line-height:15.6px;width:80.0px;text-align:center;color:#3a3f4a">105</div><div class="a" style="left:1740.0px;top:484.9px;width:94.0px;height:21.2px;background:#6466e0;border-radius:4px 0 0 4px;overflow:hidden;"><div class="a" style="left:5px;top:5.5px;font-size:12.6px;line-height:12.6px;color:#fff"><b>PO#:</b> 455 <b>Qty:</b> 10</div></div><div class="a" style="left:1740.0px;top:507.0px;width:94.0px;height:22.4px;background:#21cc94;border-radius:4px 0 0 4px;overflow:hidden;"><div class="a" style="left:5px;top:5.4px;font-size:12.6px;line-height:12.6px;color:#fff"><b>ETA:</b> 2025-Dec-31</div></div><div class="a" style="left:69.0px;top:542.0px;width:1765.0px;height:63.2px;background:#fff;"></div><div class="a" style="left:69.0px;top:604.2px;width:1765.0px;height:2.0px;background:#e1e8f1;"></div><div class="a" style="left:78.3px;top:554.5px;width:16.4px;height:16.0px;border:1.5px solid #6c6c6c;border-radius:3px;background:#fff;"></div><div class="a" style="left:99.2px;top:547.5px;width:74.7px;height:30.7px;background:#f5f6f8;border-radius:5px;"></div><svg class="a" style="left:112px;top:555.5px;" width="6" height="14" viewBox="0 0 6 14"><rect x="1" y="0.6" width="4" height="3.2" fill="#111"/><rect x="1" y="5.4" width="4" height="3.2" fill="#111"/><rect x="1" y="10.2" width="4" height="3.2" fill="#111"/></svg><svg class="a" style="left:140px;top:559.5px;" width="13" height="9" viewBox="0 0 13 9"><path d="M1 1 L6.5 7 L12 1" fill="none" stroke="#333" stroke-width="1.2"/></svg><svg class="a" style="left:188px;top:555.5px;" width="12" height="12" viewBox="0 0 12 12"><path d="M6 0.5 V11.5 M0.5 6 H11.5" stroke="#2a2f3a" stroke-width="2.8"/></svg><div class="a " style="left:359.1px;top:551.1px;font-size:15.4px;line-height:15.4px;width:121.0px;text-align:center;color:#3d6b9c;letter-spacing:0.3px">shopi-5</div><div class="a " style="left:700.0px;top:549.5px;font-size:12.4px;line-height:12.4px;width:181.0px;text-align:center;color:#2f2f2f;letter-spacing:0px">Desc0001</div><div class="a " style="left:972.5px;top:551.1px;font-size:15.6px;line-height:15.6px;width:80.0px;text-align:center;color:#3a3f4a">100</div><div class="a " style="left:1060.0px;top:551.1px;font-size:15.6px;line-height:15.6px;width:80.0px;text-align:center;color:#3a3f4a">100</div><div class="a " style="left:1147.4px;top:551.1px;font-size:15.6px;line-height:15.6px;width:80.0px;text-align:center;color:#3a3f4a">0</div><div class="a " style="left:1267.0px;top:551.1px;font-size:15.6px;line-height:15.6px;width:80.0px;text-align:center;color:#3a3f4a">0</div><div class="a " style="left:1386.5px;top:551.1px;font-size:15.6px;line-height:15.6px;width:80.0px;text-align:center;color:#3a3f4a">0</div><div class="a " style="left:1506.0px;top:551.1px;font-size:15.6px;line-height:15.6px;width:80.0px;text-align:center;color:#3a3f4a">0</div><div class="a " style="left:1630.0px;top:551.1px;font-size:15.6px;line-height:15.6px;width:80.0px;text-align:center;color:#3a3f4a">100</div><div class="a" style="left:1740.0px;top:547.7px;width:94.0px;height:21.2px;background:#6466e0;border-radius:4px 0 0 4px;overflow:hidden;"><div class="a" style="left:5px;top:5.5px;font-size:12.6px;line-height:12.6px;color:#fff"><b>PO#:</b> 455 <b>Qty:</b> 10</div></div><div class="a" style="left:1740.0px;top:569.8px;width:94.0px;height:22.4px;background:#21cc94;border-radius:4px 0 0 4px;overflow:hidden;"><div class="a" style="left:5px;top:5.4px;font-size:12.6px;line-height:12.6px;color:#fff"><b>ETA:</b> 2025-Dec-31</div></div><div class="a" style="left:69.0px;top:605.2px;width:1765.0px;height:46.6px;background:#f9f9f9;"></div><div class="a" style="left:69.0px;top:650.8px;width:1765.0px;height:2.0px;background:#e1e8f1;"></div><div class="a" style="left:78.3px;top:617.7px;width:16.4px;height:16.0px;border:1.5px solid #6c6c6c;border-radius:3px;background:#fff;"></div><div class="a" style="left:99.2px;top:610.7px;width:74.7px;height:30.7px;background:#f5f6f8;border-radius:5px;"></div><svg class="a" style="left:112px;top:618.7px;" width="6" height="14" viewBox="0 0 6 14"><rect x="1" y="0.6" width="4" height="3.2" fill="#111"/><rect x="1" y="5.4" width="4" height="3.2" fill="#111"/><rect x="1" y="10.2" width="4" height="3.2" fill="#111"/></svg><svg class="a" style="left:140px;top:622.7px;" width="13" height="9" viewBox="0 0 13 9"><path d="M1 1 L6.5 7 L12 1" fill="none" stroke="#333" stroke-width="1.2"/></svg><svg class="a" style="left:188px;top:618.7px;" width="12" height="12" viewBox="0 0 12 12"><path d="M6 0.5 V11.5 M0.5 6 H11.5" stroke="#2a2f3a" stroke-width="2.8"/></svg><div class="a " style="left:359.3px;top:614.3px;font-size:15.4px;line-height:15.4px;width:121.0px;text-align:center;color:#3d6b9c;letter-spacing:0.56px">prodTest-04</div><div class="a " style="left:700.1px;top:612.7px;font-size:12.4px;line-height:12.4px;width:181.0px;text-align:center;color:#2f2f2f;letter-spacing:0.2px">Oximeter</div><div class="a " style="left:972.5px;top:614.3px;font-size:15.6px;line-height:15.6px;width:80.0px;text-align:center;color:#3a3f4a">263</div><div class="a " style="left:1060.0px;top:614.3px;font-size:15.6px;line-height:15.6px;width:80.0px;text-align:center;color:#3a3f4a">262</div><div class="a " style="left:1147.4px;top:614.3px;font-size:15.6px;line-height:15.6px;width:80.0px;text-align:center;color:#3a3f4a">0</div><div class="a " style="left:1267.0px;top:614.3px;font-size:15.6px;line-height:15.6px;width:80.0px;text-align:center;color:#3a3f4a">0</div><div class="a " style="left:1386.5px;top:614.3px;font-size:15.6px;line-height:15.6px;width:80.0px;text-align:center;color:#3a3f4a">1</div><div class="a " style="left:1506.0px;top:614.3px;font-size:15.6px;line-height:15.6px;width:80.0px;text-align:center;color:#3a3f4a">0</div><div class="a " style="left:1630.0px;top:614.3px;font-size:15.6px;line-height:15.6px;width:80.0px;text-align:center;color:#3a3f4a">263</div><div class="a" style="left:69.0px;top:651.8px;width:1765.0px;height:46.4px;background:#fff;"></div><div class="a" style="left:69.0px;top:697.2px;width:1765.0px;height:2.0px;background:#e1e8f1;"></div><div class="a" style="left:78.3px;top:664.3px;width:16.4px;height:16.0px;border:1.5px solid #6c6c6c;border-radius:3px;background:#fff;"></div><div class="a" style="left:99.2px;top:657.3px;width:74.7px;height:30.7px;background:#f5f6f8;border-radius:5px;"></div><svg class="a" style="left:112px;top:665.3px;" width="6" height="14" viewBox="0 0 6 14"><rect x="1" y="0.6" width="4" height="3.2" fill="#111"/><rect x="1" y="5.4" width="4" height="3.2" fill="#111"/><rect x="1" y="10.2" width="4" height="3.2" fill="#111"/></svg><svg class="a" style="left:140px;top:669.3px;" width="13" height="9" viewBox="0 0 13 9"><path d="M1 1 L6.5 7 L12 1" fill="none" stroke="#333" stroke-width="1.2"/></svg><svg class="a" style="left:188px;top:665.3px;" width="12" height="12" viewBox="0 0 12 12"><path d="M6 0.5 V11.5 M0.5 6 H11.5" stroke="#2a2f3a" stroke-width="2.8"/></svg><div class="a " style="left:359.3px;top:660.9px;font-size:15.4px;line-height:15.4px;width:121.0px;text-align:center;color:#3d6b9c;letter-spacing:0.56px">prodTest-05</div><div class="a " style="left:700.1px;top:659.3px;font-size:12.4px;line-height:12.4px;width:181.0px;text-align:center;color:#2f2f2f;letter-spacing:0.3px">Multiparameter Monitor</div><div class="a " style="left:972.5px;top:660.9px;font-size:15.6px;line-height:15.6px;width:80.0px;text-align:center;color:#3a3f4a">214</div><div class="a " style="left:1060.0px;top:660.9px;font-size:15.6px;line-height:15.6px;width:80.0px;text-align:center;color:#3a3f4a">214</div><div class="a " style="left:1147.4px;top:660.9px;font-size:15.6px;line-height:15.6px;width:80.0px;text-align:center;color:#3a3f4a">0</div><div class="a " style="left:1267.0px;top:660.9px;font-size:15.6px;line-height:15.6px;width:80.0px;text-align:center;color:#3a3f4a">0</div><div class="a " style="left:1386.5px;top:660.9px;font-size:15.6px;line-height:15.6px;width:80.0px;text-align:center;color:#3a3f4a">0</div><div class="a " style="left:1506.0px;top:660.9px;font-size:15.6px;line-height:15.6px;width:80.0px;text-align:center;color:#3a3f4a">0</div><div class="a " style="left:1630.0px;top:660.9px;font-size:15.6px;line-height:15.6px;width:80.0px;text-align:center;color:#3a3f4a">214</div><div class="a" style="left:69.0px;top:698.2px;width:1765.0px;height:46.4px;background:#f9f9f9;"></div><div class="a" style="left:69.0px;top:743.6px;width:1765.0px;height:2.0px;background:#e1e8f1;"></div><div class="a" style="left:78.3px;top:710.7px;width:16.4px;height:16.0px;border:1.5px solid #6c6c6c;border-radius:3px;background:#fff;"></div><div class="a" style="left:99.2px;top:703.7px;width:74.7px;height:30.7px;background:#f5f6f8;border-radius:5px;"></div><svg class="a" style="left:112px;top:711.7px;" width="6" height="14" viewBox="0 0 6 14"><rect x="1" y="0.6" width="4" height="3.2" fill="#111"/><rect x="1" y="5.4" width="4" height="3.2" fill="#111"/><rect x="1" y="10.2" width="4" height="3.2" fill="#111"/></svg><svg class="a" style="left:140px;top:715.7px;" width="13" height="9" viewBox="0 0 13 9"><path d="M1 1 L6.5 7 L12 1" fill="none" stroke="#333" stroke-width="1.2"/></svg><svg class="a" style="left:188px;top:711.7px;" width="12" height="12" viewBox="0 0 12 12"><path d="M6 0.5 V11.5 M0.5 6 H11.5" stroke="#2a2f3a" stroke-width="2.8"/></svg><div class="a " style="left:358.9px;top:707.3px;font-size:15.4px;line-height:15.4px;width:121.0px;text-align:center;color:#3d6b9c;letter-spacing:-0.15px">ssku 1</div><div class="a " style="left:700.0px;top:705.7px;font-size:12.4px;line-height:12.4px;width:181.0px;text-align:center;color:#2f2f2f;letter-spacing:0px">Desc 1</div><div class="a " style="left:972.5px;top:707.3px;font-size:15.6px;line-height:15.6px;width:80.0px;text-align:center;color:#3a3f4a">98</div><div class="a " style="left:1060.0px;top:707.3px;font-size:15.6px;line-height:15.6px;width:80.0px;text-align:center;color:#3a3f4a">90</div><div class="a " style="left:1147.4px;top:707.3px;font-size:15.6px;line-height:15.6px;width:80.0px;text-align:center;color:#3a3f4a">0</div><div class="a " style="left:1267.0px;top:707.3px;font-size:15.6px;line-height:15.6px;width:80.0px;text-align:center;color:#3a3f4a">0</div><div class="a " style="left:1386.5px;top:707.3px;font-size:15.6px;line-height:15.6px;width:80.0px;text-align:center;color:#3a3f4a">8</div><div class="a " style="left:1506.0px;top:707.3px;font-size:15.6px;line-height:15.6px;width:80.0px;text-align:center;color:#3a3f4a">0</div><div class="a " style="left:1630.0px;top:707.3px;font-size:15.6px;line-height:15.6px;width:80.0px;text-align:center;color:#3a3f4a">98</div><div class="a" style="left:69.0px;top:744.6px;width:1765.0px;height:46.4px;background:#fff;"></div><div class="a" style="left:69.0px;top:790.0px;width:1765.0px;height:2.0px;background:#e1e8f1;"></div><div class="a" style="left:78.3px;top:757.1px;width:16.4px;height:16.0px;border:1.5px solid #6c6c6c;border-radius:3px;background:#fff;"></div><div class="a" style="left:99.2px;top:750.1px;width:74.7px;height:30.7px;background:#f5f6f8;border-radius:5px;"></div><svg class="a" style="left:112px;top:758.1px;" width="6" height="14" viewBox="0 0 6 14"><rect x="1" y="0.6" width="4" height="3.2" fill="#111"/><rect x="1" y="5.4" width="4" height="3.2" fill="#111"/><rect x="1" y="10.2" width="4" height="3.2" fill="#111"/></svg><svg class="a" style="left:140px;top:762.1px;" width="13" height="9" viewBox="0 0 13 9"><path d="M1 1 L6.5 7 L12 1" fill="none" stroke="#333" stroke-width="1.2"/></svg><svg class="a" style="left:188px;top:758.1px;" width="12" height="12" viewBox="0 0 12 12"><path d="M6 0.5 V11.5 M0.5 6 H11.5" stroke="#2a2f3a" stroke-width="2.8"/></svg><div class="a " style="left:358.9px;top:753.7px;font-size:15.4px;line-height:15.4px;width:121.0px;text-align:center;color:#3d6b9c;letter-spacing:-0.15px">ssku 2</div><div class="a " style="left:700.0px;top:752.1px;font-size:12.4px;line-height:12.4px;width:181.0px;text-align:center;color:#2f2f2f;letter-spacing:0px">Desc 2</div><div class="a " style="left:972.5px;top:753.7px;font-size:15.6px;line-height:15.6px;width:80.0px;text-align:center;color:#3a3f4a">97</div><div class="a " style="left:1060.0px;top:753.7px;font-size:15.6px;line-height:15.6px;width:80.0px;text-align:center;color:#3a3f4a">97</div><div class="a " style="left:1147.4px;top:753.7px;font-size:15.6px;line-height:15.6px;width:80.0px;text-align:center;color:#3a3f4a">0</div><div class="a " style="left:1267.0px;top:753.7px;font-size:15.6px;line-height:15.6px;width:80.0px;text-align:center;color:#3a3f4a">0</div><div class="a " style="left:1386.5px;top:753.7px;font-size:15.6px;line-height:15.6px;width:80.0px;text-align:center;color:#3a3f4a">0</div><div class="a " style="left:1506.0px;top:753.7px;font-size:15.6px;line-height:15.6px;width:80.0px;text-align:center;color:#3a3f4a">0</div><div class="a " style="left:1630.0px;top:753.7px;font-size:15.6px;line-height:15.6px;width:80.0px;text-align:center;color:#3a3f4a">97</div><div class="a" style="left:69.0px;top:791.0px;width:1765.0px;height:46.4px;background:#f9f9f9;"></div><div class="a" style="left:69.0px;top:836.4px;width:1765.0px;height:2.0px;background:#e1e8f1;"></div><div class="a" style="left:78.3px;top:803.5px;width:16.4px;height:16.0px;border:1.5px solid #6c6c6c;border-radius:3px;background:#fff;"></div><div class="a" style="left:99.2px;top:796.5px;width:74.7px;height:30.7px;background:#f5f6f8;border-radius:5px;"></div><svg class="a" style="left:112px;top:804.5px;" width="6" height="14" viewBox="0 0 6 14"><rect x="1" y="0.6" width="4" height="3.2" fill="#111"/><rect x="1" y="5.4" width="4" height="3.2" fill="#111"/><rect x="1" y="10.2" width="4" height="3.2" fill="#111"/></svg><svg class="a" style="left:140px;top:808.5px;" width="13" height="9" viewBox="0 0 13 9"><path d="M1 1 L6.5 7 L12 1" fill="none" stroke="#333" stroke-width="1.2"/></svg><svg class="a" style="left:188px;top:804.5px;" width="12" height="12" viewBox="0 0 12 12"><path d="M6 0.5 V11.5 M0.5 6 H11.5" stroke="#2a2f3a" stroke-width="2.8"/></svg><div class="a " style="left:358.9px;top:800.1px;font-size:15.4px;line-height:15.4px;width:121.0px;text-align:center;color:#3d6b9c;letter-spacing:-0.15px">ssku 3</div><div class="a " style="left:700.0px;top:798.5px;font-size:12.4px;line-height:12.4px;width:181.0px;text-align:center;color:#2f2f2f;letter-spacing:0px">Desc 3</div><div class="a " style="left:972.5px;top:800.1px;font-size:15.6px;line-height:15.6px;width:80.0px;text-align:center;color:#3a3f4a">97</div><div class="a " style="left:1060.0px;top:800.1px;font-size:15.6px;line-height:15.6px;width:80.0px;text-align:center;color:#3a3f4a">97</div><div class="a " style="left:1147.4px;top:800.1px;font-size:15.6px;line-height:15.6px;width:80.0px;text-align:center;color:#3a3f4a">0</div><div class="a " style="left:1267.0px;top:800.1px;font-size:15.6px;line-height:15.6px;width:80.0px;text-align:center;color:#3a3f4a">0</div><div class="a " style="left:1386.5px;top:800.1px;font-size:15.6px;line-height:15.6px;width:80.0px;text-align:center;color:#3a3f4a">0</div><div class="a " style="left:1506.0px;top:800.1px;font-size:15.6px;line-height:15.6px;width:80.0px;text-align:center;color:#3a3f4a">0</div><div class="a " style="left:1630.0px;top:800.1px;font-size:15.6px;line-height:15.6px;width:80.0px;text-align:center;color:#3a3f4a">97</div><div class="a" style="left:69.0px;top:837.4px;width:1765.0px;height:46.3px;background:#fff;"></div><div class="a" style="left:69.0px;top:882.7px;width:1765.0px;height:2.0px;background:#e1e8f1;"></div><div class="a" style="left:78.3px;top:849.9px;width:16.4px;height:16.0px;border:1.5px solid #6c6c6c;border-radius:3px;background:#fff;"></div><div class="a" style="left:99.2px;top:842.9px;width:74.7px;height:30.7px;background:#f5f6f8;border-radius:5px;"></div><svg class="a" style="left:112px;top:850.9px;" width="6" height="14" viewBox="0 0 6 14"><rect x="1" y="0.6" width="4" height="3.2" fill="#111"/><rect x="1" y="5.4" width="4" height="3.2" fill="#111"/><rect x="1" y="10.2" width="4" height="3.2" fill="#111"/></svg><svg class="a" style="left:140px;top:854.9px;" width="13" height="9" viewBox="0 0 13 9"><path d="M1 1 L6.5 7 L12 1" fill="none" stroke="#333" stroke-width="1.2"/></svg><svg class="a" style="left:188px;top:850.9px;" width="12" height="12" viewBox="0 0 12 12"><path d="M6 0.5 V11.5 M0.5 6 H11.5" stroke="#2a2f3a" stroke-width="2.8"/></svg><div class="a " style="left:358.9px;top:846.5px;font-size:15.4px;line-height:15.4px;width:121.0px;text-align:center;color:#3d6b9c;letter-spacing:-0.15px">ssku 4</div><div class="a " style="left:700.0px;top:844.9px;font-size:12.4px;line-height:12.4px;width:181.0px;text-align:center;color:#2f2f2f;letter-spacing:0px">Desc 4</div><div class="a " style="left:972.5px;top:846.5px;font-size:15.6px;line-height:15.6px;width:80.0px;text-align:center;color:#3a3f4a">96</div><div class="a " style="left:1060.0px;top:846.5px;font-size:15.6px;line-height:15.6px;width:80.0px;text-align:center;color:#3a3f4a">96</div><div class="a " style="left:1147.4px;top:846.5px;font-size:15.6px;line-height:15.6px;width:80.0px;text-align:center;color:#3a3f4a">0</div><div class="a " style="left:1267.0px;top:846.5px;font-size:15.6px;line-height:15.6px;width:80.0px;text-align:center;color:#3a3f4a">0</div><div class="a " style="left:1386.5px;top:846.5px;font-size:15.6px;line-height:15.6px;width:80.0px;text-align:center;color:#3a3f4a">0</div><div class="a " style="left:1506.0px;top:846.5px;font-size:15.6px;line-height:15.6px;width:80.0px;text-align:center;color:#3a3f4a">0</div><div class="a " style="left:1630.0px;top:846.5px;font-size:15.6px;line-height:15.6px;width:80.0px;text-align:center;color:#3a3f4a">96</div><div class="a" style="left:69.0px;top:883.7px;width:1765.0px;height:46.4px;background:#f9f9f9;"></div><div class="a" style="left:69.0px;top:929.1px;width:1765.0px;height:2.0px;background:#e1e8f1;"></div><div class="a" style="left:78.3px;top:896.2px;width:16.4px;height:16.0px;border:1.5px solid #6c6c6c;border-radius:3px;background:#fff;"></div><div class="a" style="left:99.2px;top:889.2px;width:74.7px;height:30.7px;background:#f5f6f8;border-radius:5px;"></div><svg class="a" style="left:112px;top:897.2px;" width="6" height="14" viewBox="0 0 6 14"><rect x="1" y="0.6" width="4" height="3.2" fill="#111"/><rect x="1" y="5.4" width="4" height="3.2" fill="#111"/><rect x="1" y="10.2" width="4" height="3.2" fill="#111"/></svg><svg class="a" style="left:140px;top:901.2px;" width="13" height="9" viewBox="0 0 13 9"><path d="M1 1 L6.5 7 L12 1" fill="none" stroke="#333" stroke-width="1.2"/></svg><svg class="a" style="left:188px;top:897.2px;" width="12" height="12" viewBox="0 0 12 12"><path d="M6 0.5 V11.5 M0.5 6 H11.5" stroke="#2a2f3a" stroke-width="2.8"/></svg><div class="a " style="left:358.9px;top:892.8px;font-size:15.4px;line-height:15.4px;width:121.0px;text-align:center;color:#3d6b9c;letter-spacing:-0.15px">ssku 5</div><div class="a " style="left:700.0px;top:891.2px;font-size:12.4px;line-height:12.4px;width:181.0px;text-align:center;color:#2f2f2f;letter-spacing:0px">Desc 5</div><div class="a " style="left:972.5px;top:892.8px;font-size:15.6px;line-height:15.6px;width:80.0px;text-align:center;color:#3a3f4a">94</div><div class="a " style="left:1060.0px;top:892.8px;font-size:15.6px;line-height:15.6px;width:80.0px;text-align:center;color:#3a3f4a">94</div><div class="a " style="left:1147.4px;top:892.8px;font-size:15.6px;line-height:15.6px;width:80.0px;text-align:center;color:#3a3f4a">0</div><div class="a " style="left:1267.0px;top:892.8px;font-size:15.6px;line-height:15.6px;width:80.0px;text-align:center;color:#3a3f4a">0</div><div class="a " style="left:1386.5px;top:892.8px;font-size:15.6px;line-height:15.6px;width:80.0px;text-align:center;color:#3a3f4a">0</div><div class="a " style="left:1506.0px;top:892.8px;font-size:15.6px;line-height:15.6px;width:80.0px;text-align:center;color:#3a3f4a">0</div><div class="a " style="left:1630.0px;top:892.8px;font-size:15.6px;line-height:15.6px;width:80.0px;text-align:center;color:#3a3f4a">94</div><div class="a" style="left:1791.0px;top:868.7px;width:97.0px;height:43.6px;background:#1a79b5;border-radius:22px 4px 22px 22px;"></div><svg class="a" style="left:1802px;top:877px;" width="22" height="22" viewBox="0 0 22 22"><circle cx="11" cy="11" r="9.5" fill="none" stroke="#fff" stroke-width="1.6"/><text x="11" y="15.5" text-anchor="middle" font-family="Liberation Sans" font-weight="bold" font-size="13" fill="#fff">?</text></svg><div class="a " style="left:1829.0px;top:881.6px;font-size:17px;line-height:17px;color:#fff;font-weight:bold">Help</div><div class="a" style="left:1904.0px;top:0.0px;width:15.0px;height:931.0px;background:#2b2b2b;"></div><div class="a" style="left:1907.0px;top:16.0px;width:9.0px;height:709.0px;background:#9f9f9f;border-radius:5px;"></div><svg class="a" style="left:1906px;top:3px;" width="11" height="7" viewBox="0 0 11 7"><path d="M1 6 L5.5 1 L10 6 Z" fill="#9f9f9f"/></svg><svg class="a" style="left:1906px;top:920px;" width="11" height="7" viewBox="0 0 11 7"><path d="M1 1 L5.5 6 L10 1 Z" fill="#9f9f9f"/></svg>
</body></html>
